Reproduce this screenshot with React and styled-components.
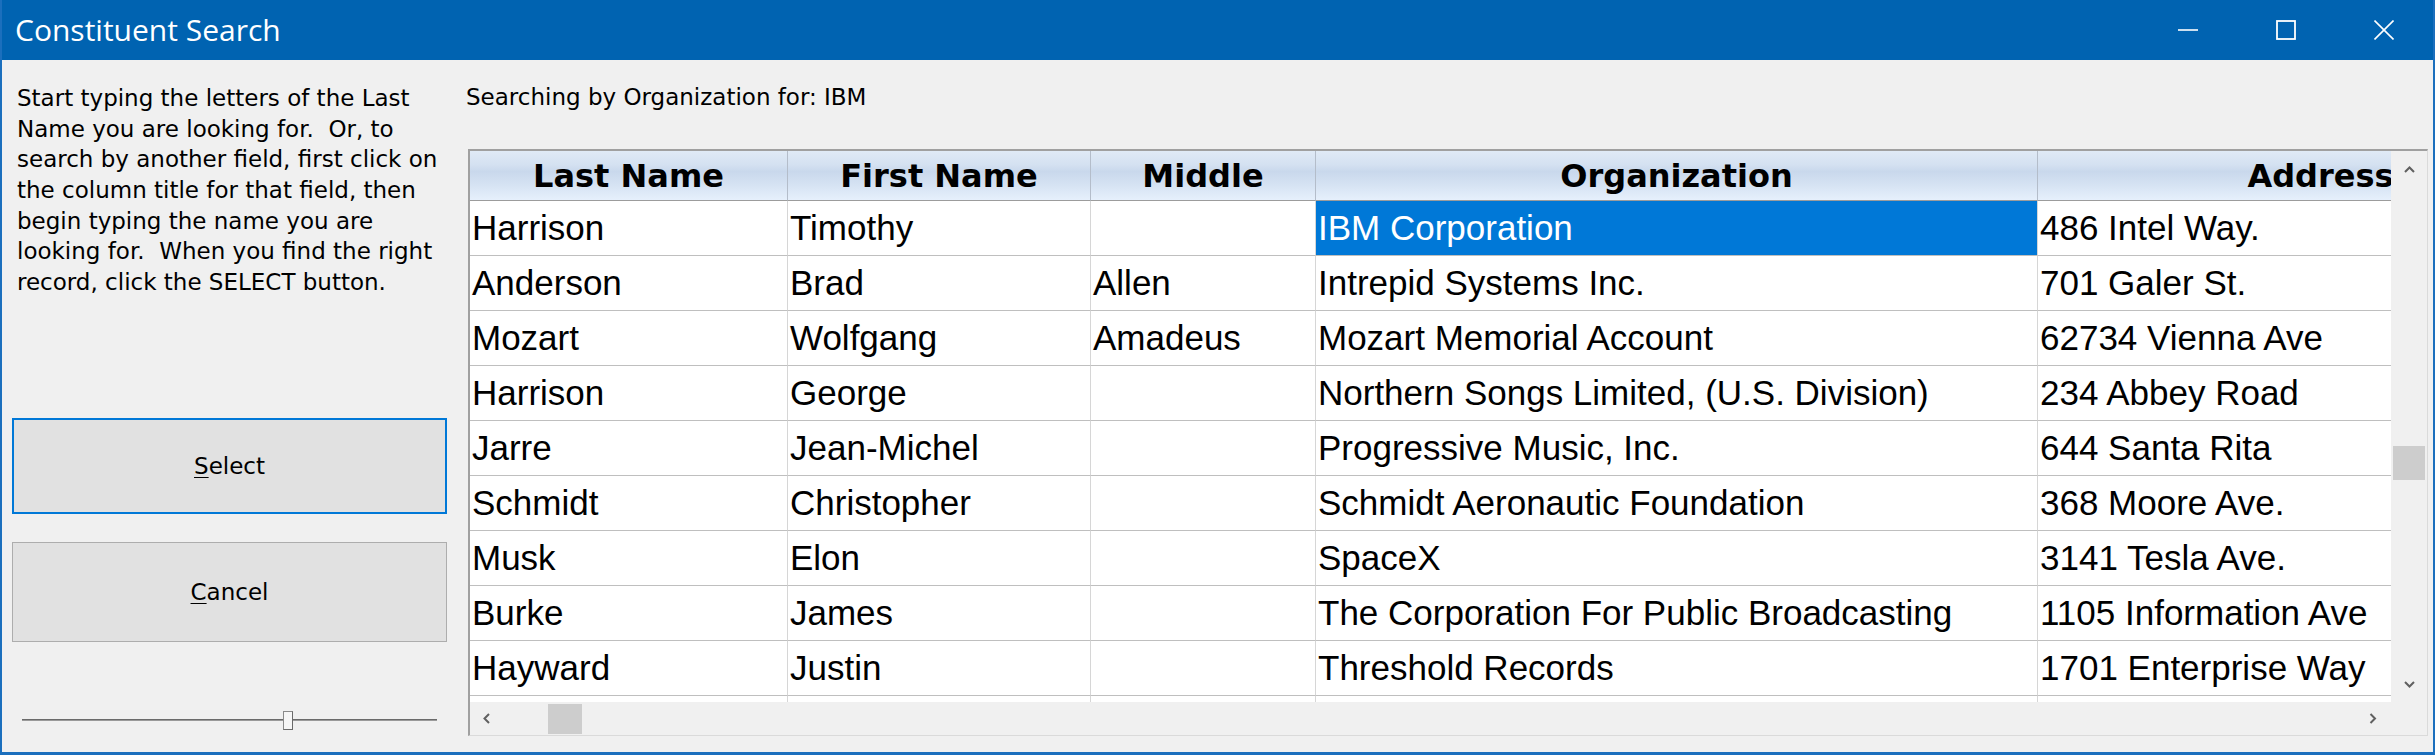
import React from 'react';
import styled, { createGlobalStyle } from 'styled-components';

const GlobalStyle = createGlobalStyle`
  html, body { margin: 0; padding: 0; background: #f0f0f0; }
  body { width: 2435px; height: 755px; overflow: hidden; }
  *, *::before, *::after { box-sizing: border-box; }
`;

const Window = styled.div`
  width: 2435px;
  height: 755px;
  display: flex;
  flex-direction: column;
  border: 2px solid #1b6fbd;
  border-top: 0;
  border-bottom-width: 3px;
  background: #f0f0f0;
  font-family: "DejaVu Sans", Verdana, sans-serif;
  color: #000;
`;

const TitleBar = styled.div`
  height: 60px;
  flex: none;
  display: flex;
  align-items: center;
  background: #0063b1;
  color: #fff;
`;

const Title = styled.div`
  flex: 1;
  padding-left: 13px;
  font-family: "Open Sans", "Noto Sans", sans-serif;
  font-size: 30px;
  line-height: 1;
  padding-bottom: 1px;
`;

const CaptionButton = styled.div`
  width: 98px;
  height: 60px;
  display: flex;
  align-items: center;
  justify-content: center;
`;

const Body = styled.div`
  flex: 1;
  display: flex;
  min-height: 0;
`;

const LeftPanel = styled.div`
  width: 464px;
  flex: none;
  display: flex;
  flex-direction: column;
  padding: 23px 0 0 10px;
`;

const HelpText = styled.p`
  margin: 0 0 0 5px;
  font-size: 23px;
  line-height: 30.67px;
  white-space: pre;
`;

const ActionButton = styled.button`
  width: 435px;
  height: ${p => p.$height}px;
  margin-top: ${p => p.$top}px;
  padding: 0;
  background: #e1e1e1;
  border: ${p => (p.$isDefault ? '2px solid #0078d7' : '1px solid #adadad')};
  font-family: "DejaVu Sans", Verdana, sans-serif;
  font-size: 23px;
  color: #000;
  u { text-underline-offset: 3px; text-decoration-thickness: 1px; }
`;

const Slider = styled.div`
  margin: 69px 0 0 10px;
  width: 415px;
  height: 19px;
  display: flex;
  align-items: center;
`;

const SliderTrack = styled.div`
  height: 2px;
  flex: ${p => (p.$grow ? '1' : `0 0 ${p.$width}px`)};
  border-top: 1px solid #6a6a6a;
  border-bottom: 1px solid #9a9a9a;
`;

const SliderThumb = styled.div`
  width: 10px;
  height: 19px;
  flex: none;
  background: #f6f6f6;
  border: 1px solid #8a8a8a;
  border-right-color: #6a6a6a;
  border-bottom-color: #6a6a6a;
`;

const RightPanel = styled.div`
  flex: 1;
  min-width: 0;
  display: flex;
  flex-direction: column;
  padding: 22px 5px 0 0;
`;

const SearchLabel = styled.div`
  font-size: 23px;
  line-height: 31px;
  white-space: pre;
`;

const GridFrame = styled.div`
  margin: 36px 0 0 2px;
  height: 587px;
  display: flex;
  flex-direction: column;
  border-style: solid;
  border-width: 2px 1px 1px 2px;
  border-color: #a0a0a0 #dadada #dadada #a0a0a0;
  background: #f0f0f0;
`;

const GridMain = styled.div`
  display: flex;
  height: 551px;
  flex: none;
`;

const Viewport = styled.div`
  flex: 1;
  min-width: 0;
  overflow: hidden;
  background: #fff;
`;

const Table = styled.div`
  display: grid;
  grid-template-columns: 318px 303px 225px 722px 566px;
  width: max-content;
`;

const HeaderCell = styled.div`
  height: 50px;
  display: flex;
  align-items: center;
  justify-content: center;
  border-bottom: 1px solid #9c9c9c;
  border-right: 1px solid #b4bdca;
  background: linear-gradient(to bottom, #e0eaf6 0%, #d4e1f1 28%, #c9d8ec 42%, #d6e3f3 70%, #e6f0fc 100%);
  font-family: "DejaVu Sans", Verdana, sans-serif;
  font-weight: 700;
  font-size: 32px;
  white-space: nowrap;
  overflow: hidden;
`;

const Cell = styled.div`
  height: 55px;
  display: flex;
  align-items: center;
  padding-left: 2px;
  border-bottom: 1px solid #bfbfbf;
  border-right: 1px solid #d6d6d6;
  background: ${p => (p.$selected ? '#0078d7' : '#fff')};
  color: ${p => (p.$selected ? '#fff' : '#000')};
  font-family: "Liberation Sans", Arial, sans-serif;
  font-size: 35px;
  white-space: nowrap;
  overflow: hidden;
`;

const VScroll = styled.div`
  width: 36px;
  flex: none;
  display: flex;
  flex-direction: column;
  background: #f0f0f0;
`;

const ArrowBox = styled.div`
  width: ${p => p.$w}px;
  height: ${p => p.$h}px;
  flex: none;
  display: flex;
  align-items: center;
  justify-content: center;
`;

const VTrack = styled.div`
  flex: 1;
  display: flex;
  flex-direction: column;
  align-items: center;
`;

const VThumb = styled.div`
  width: 32px;
  height: 34px;
  background: #cdcdcd;
`;

const HScroll = styled.div`
  height: 33px;
  flex: none;
  display: flex;
`;

const HBar = styled.div`
  flex: 1;
  display: flex;
  background: #f0f0f0;
`;

const HTrack = styled.div`
  flex: 1;
  display: flex;
  align-items: center;
`;

const HThumb = styled.div`
  width: 34px;
  height: 30px;
  background: #cdcdcd;
`;

const Corner = styled.div`
  width: 36px;
  flex: none;
  background: #f0f0f0;
`;

const Chevron = ({ dir }) => {
  const pts = {
    up: '1,7 5.5,2.5 10,7',
    down: '1,2 5.5,6.5 10,2',
    left: '6,1 1.5,5.5 6,10',
    right: '1.5,1 6,5.5 1.5,10',
  }[dir];
  const vertical = dir === 'up' || dir === 'down';
  return (
    <svg width={vertical ? 11 : 8} height={vertical ? 9 : 11} viewBox={vertical ? '0 0 11 9' : '0 0 8 11'}>
      <polyline points={pts} fill="none" stroke="#606060" strokeWidth="2" />
    </svg>
  );
};

const columns = ['Last Name', 'First Name', 'Middle', 'Organization', 'Address'];

const rows = [
  ['Harrison', 'Timothy', '', 'IBM Corporation', '486 Intel Way.'],
  ['Anderson', 'Brad', 'Allen', 'Intrepid Systems Inc.', '701 Galer St.'],
  ['Mozart', 'Wolfgang', 'Amadeus', 'Mozart Memorial Account', '62734 Vienna Ave'],
  ['Harrison', 'George', '', 'Northern Songs Limited, (U.S. Division)', '234 Abbey Road'],
  ['Jarre', 'Jean-Michel', '', 'Progressive Music, Inc.', '644 Santa Rita'],
  ['Schmidt', 'Christopher', '', 'Schmidt Aeronautic Foundation', '368 Moore Ave.'],
  ['Musk', 'Elon', '', 'SpaceX', '3141 Tesla Ave.'],
  ['Burke', 'James', '', 'The Corporation For Public Broadcasting', '1105 Information Ave'],
  ['Hayward', 'Justin', '', 'Threshold Records', '1701 Enterprise Way'],
  ['', '', '', '', ''],
];

const helpLines = [
  'Start typing the letters of the Last',
  'Name you are looking for.  Or, to',
  'search by another field, first click on',
  'the column title for that field, then',
  'begin typing the name you are',
  'looking for.  When you find the right',
  'record, click the SELECT button.',
];

export default function App() {
  return (
    <>
      <GlobalStyle />
      <Window>
        <TitleBar>
          <Title>Constituent Search</Title>
          <CaptionButton>
            <svg width="20" height="20" viewBox="0 0 20 20">
              <line x1="0" y1="10" x2="20" y2="10" stroke="#fff" strokeWidth="1.6" />
            </svg>
          </CaptionButton>
          <CaptionButton>
            <svg width="20" height="20" viewBox="0 0 20 20">
              <rect x="1" y="1" width="18" height="18" fill="none" stroke="#fff" strokeWidth="1.8" />
            </svg>
          </CaptionButton>
          <CaptionButton>
            <svg width="20" height="20" viewBox="0 0 20 20">
              <line x1="0.5" y1="0.5" x2="19.5" y2="19.5" stroke="#fff" strokeWidth="1.6" />
              <line x1="19.5" y1="0.5" x2="0.5" y2="19.5" stroke="#fff" strokeWidth="1.6" />
            </svg>
          </CaptionButton>
        </TitleBar>
        <Body>
          <LeftPanel>
            <HelpText>{helpLines.join('\n')}</HelpText>
            <ActionButton $isDefault $height={96} $top={120}>
              <u>S</u>elect
            </ActionButton>
            <ActionButton $height={100} $top={28}>
              <u>C</u>ancel
            </ActionButton>
            <Slider>
              <SliderTrack $width={261} />
              <SliderThumb />
              <SliderTrack $grow />
            </Slider>
          </LeftPanel>
          <RightPanel>
            <SearchLabel>Searching by Organization for: IBM</SearchLabel>
            <GridFrame>
              <GridMain>
                <Viewport>
                  <Table>
                    {columns.map(c => (
                      <HeaderCell key={c}>{c}</HeaderCell>
                    ))}
                    {rows.map((r, ri) =>
                      r.map((v, ci) => (
                        <Cell key={`${ri}-${ci}`} $selected={ri === 0 && ci === 3}>
                          {v}
                        </Cell>
                      ))
                    )}
                  </Table>
                </Viewport>
                <VScroll>
                  <ArrowBox $w={36} $h={36}>
                    <Chevron dir="up" />
                  </ArrowBox>
                  <VTrack>
                    <VThumb style={{ marginTop: 259 }} />
                  </VTrack>
                  <ArrowBox $w={36} $h={36}>
                    <Chevron dir="down" />
                  </ArrowBox>
                </VScroll>
              </GridMain>
              <HScroll>
                <HBar>
                  <ArrowBox $w={33} $h={33}>
                    <Chevron dir="left" />
                  </ArrowBox>
                  <HTrack>
                    <HThumb style={{ marginLeft: 45 }} />
                  </HTrack>
                  <ArrowBox $w={36} $h={33}>
                    <Chevron dir="right" />
                  </ArrowBox>
                </HBar>
                <Corner />
              </HScroll>
            </GridFrame>
          </RightPanel>
        </Body>
      </Window>
    </>
  );
}
